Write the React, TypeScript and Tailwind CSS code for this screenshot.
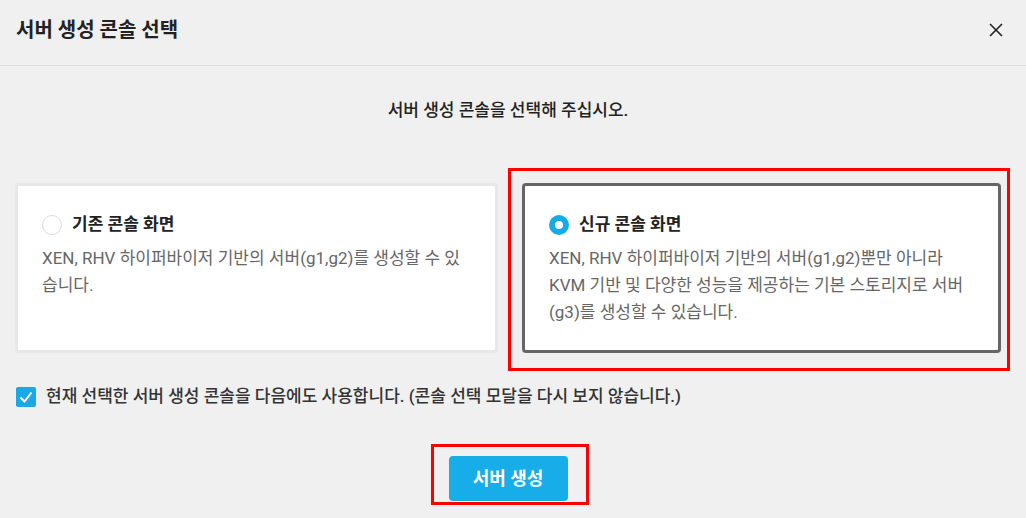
import React, { useState } from "react";

const font = { fontFamily: 'Roboto, "Noto Sans CJK KR", sans-serif' };

function Radio({ checked }: { checked: boolean }) {
  return checked ? (
    <span className="w-5 h-5 rounded-full border-[6px] border-[#16abe6] bg-white shrink-0" />
  ) : (
    <span className="w-5 h-5 rounded-full border border-[#dcdcdc] bg-white shrink-0" />
  );
}

function ConsoleCard({
  title,
  desc,
  selected,
  onClick,
}: {
  title: string;
  desc: string;
  selected: boolean;
  onClick: () => void;
}) {
  return (
    <div
      onClick={onClick}
      className={`h-[170px] bg-white rounded-[4px] border-[3px] pl-6 pr-6 pt-[27px] cursor-pointer ${
        selected ? "border-[#666666]" : "border-[#e8e8e8]"
      }`}
    >
      <div className="flex items-center gap-[10px] h-6">
        <Radio checked={selected} />
        <span className="text-[17px] font-bold text-[#222]">{title}</span>
      </div>
      <p className="mt-2 text-[17px] leading-[27px] text-[#666]">{desc}</p>
    </div>
  );
}

export default function App() {
  const [selected, setSelected] = useState("new");
  const [remember, setRemember] = useState(true);

  return (
    <div className="w-full h-[518px] bg-[#f0f0f0] overflow-hidden" style={font}>
      {/* header */}
      <div className="h-[66px] flex items-center justify-between pl-4 pr-[23px] border-b border-[#dedede] pb-[6px]">
        <h1 className="text-[20px] font-bold text-[#222]">서버 생성 콘솔 선택</h1>
        <button className="w-[14px] h-[14px]">
          <svg viewBox="0 0 14 14" width="14" height="14">
            <path d="M1 1L13 13M13 1L1 13" stroke="#222" strokeWidth="1.6" />
          </svg>
        </button>
      </div>

      <div className="pl-[15px] pr-[25px]">
        <p className="mt-8 h-6 leading-6 text-center text-[17px] font-medium text-[#222]">
          서버 생성 콘솔을 선택해 주십시오.
        </p>

        <div className="mt-[61px] grid grid-cols-[483px_479px] gap-6">
          <ConsoleCard
            title="기존 콘솔 화면"
            desc="XEN, RHV 하이퍼바이저 기반의 서버(g1,g2)를 생성할 수 있습니다."
            selected={selected === "old"}
            onClick={() => setSelected("old")}
          />
          <div className="relative">
            <ConsoleCard
              title="신규 콘솔 화면"
              desc="XEN, RHV 하이퍼바이저 기반의 서버(g1,g2)뿐만 아니라 KVM 기반 및 다양한 성능을 제공하는 기본 스토리지로 서버(g3)를 생성할 수 있습니다."
              selected={selected === "new"}
              onClick={() => setSelected("new")}
            />
            <div className="absolute -top-[15px] -left-[14px] -right-[9px] -bottom-[18px] border-[3px] border-[#ff0000] pointer-events-none" />
          </div>
        </div>

        <label className="mt-8 flex items-center gap-[10px] h-6 pl-px cursor-pointer">
          <span
            onClick={() => setRemember(!remember)}
            className={`w-5 h-5 rounded-[2px] flex items-center justify-center shrink-0 ${
              remember ? "bg-[#1aa9e6]" : "bg-white border border-[#ccc]"
            }`}
          >
            {remember && (
              <svg viewBox="0 0 20 20" width="20" height="20">
                <path d="M4.5 10.5L8.5 14.5L15.5 5.5" fill="none" stroke="#fff" strokeWidth="2" />
              </svg>
            )}
          </span>
          <span className="text-[17px] font-medium text-[#333]">
            현재 선택한 서버 생성 콘솔을 다음에도 사용합니다. (콘솔 선택 모달을 다시 보지 않습니다.)
          </span>
        </label>

        <div className="mt-[47px] flex justify-center">
          <div className="relative">
            <button className="w-[119px] h-[45px] rounded-[4px] bg-[#17ade8] text-white text-[18px] font-bold">
              서버 생성
            </button>
            <div className="absolute -top-[12px] -left-[18px] -right-[21px] -bottom-[4px] border-[3px] border-[#ff0000] pointer-events-none" />
          </div>
        </div>
      </div>
    </div>
  );
}
